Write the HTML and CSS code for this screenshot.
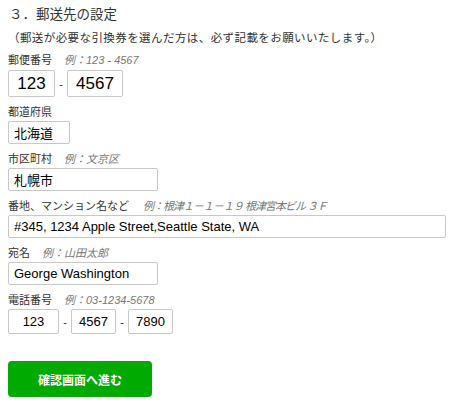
FILE: index.html
```html
<!DOCTYPE html>
<html lang="ja">
<head>
<meta charset="utf-8">
<title>郵送先の設定</title>
<link rel="stylesheet" href="styles.css">
</head>
<body>
<div class="page">
  <h2 class="title">３．郵送先の設定</h2>
  <p class="note">（郵送が必要な引換券を選んだ方は、必ず記載をお願いいたします。）</p>

  <div class="field field-first">
    <div class="label-row"><span class="label">郵便番号</span><span class="example">例：123 - 4567</span></div>
    <div class="inputs">
      <input class="box box-big w47" type="text" value="123">
      <span class="dash">-</span>
      <input class="box box-big w56" type="text" value="4567">
    </div>
  </div>

  <div class="field">
    <div class="label-row"><span class="label">都道府県</span></div>
    <input class="box text w62" type="text" value="北海道">
  </div>

  <div class="field">
    <div class="label-row"><span class="label">市区町村</span><span class="example">例：文京区</span></div>
    <input class="box text w150" type="text" value="札幌市">
  </div>

  <div class="field">
    <div class="label-row"><span class="label">番地、マンション名など</span><span class="example tight">例：根津１－１－１９ 根津宮本ビル ３Ｆ</span></div>
    <input class="box text w438" type="text" value="#345, 1234 Apple Street,Seattle State, WA">
  </div>

  <div class="field">
    <div class="label-row"><span class="label">宛名</span><span class="example">例：山田太郎</span></div>
    <input class="box text w150" type="text" value="George Washington">
  </div>

  <div class="field">
    <div class="label-row"><span class="label">電話番号</span><span class="example">例：03-1234-5678</span></div>
    <div class="inputs">
      <input class="box box-tel w51" type="text" value="123">
      <span class="dash">-</span>
      <input class="box box-tel w45" type="text" value="4567">
      <span class="dash">-</span>
      <input class="box box-tel w45" type="text" value="7890">
    </div>
  </div>

  <button class="submit" type="button">確認画面へ進む</button>
</div>
</body>
</html>
```

FILE: styles.css
```css
* { box-sizing: border-box; }

html, body {
  margin: 0;
  padding: 0;
  background: #ffffff;
}

body {
  font-family: "Liberation Sans", "Noto Sans CJK JP", sans-serif;
  color: #333333;
}

.page {
  padding: 5px 8px 0 8px;
  display: flex;
  flex-direction: column;
  align-items: flex-start;
}

.title {
  margin: 0;
  font-size: 13.5px;
  font-weight: normal;
  line-height: 20px;
  padding-left: 1px;
}

.note {
  margin: 6px 0 0 0;
  font-size: 11.5px;
  letter-spacing: 0.42px;
  line-height: 14px;
}

.field {
  display: flex;
  flex-direction: column;
  align-items: flex-start;
  margin-top: 8px;
}

.label-row {
  display: flex;
  align-items: baseline;
  height: 15px;
  line-height: 15px;
  margin-bottom: 1px;
}

.label {
  font-size: 11px;
  color: #333333;
}

.example {
  font-size: 11px;
  font-style: italic;
  color: #777777;
  margin-left: 12px;
}

.example.tight {
  letter-spacing: -1px;
  margin-left: 14px;
}

.field-first .label-row {
  margin-bottom: 2px;
}

.inputs {
  display: flex;
  align-items: center;
}

.dash {
  font-size: 11px;
  color: #333333;
  width: 12px;
  text-align: center;
}

.box {
  font-family: "Liberation Sans", "Noto Sans CJK JP", sans-serif;
  color: #000000;
  border: 1px solid #c8c8c8;
  border-radius: 2px;
  background: #ffffff;
  margin: 0;
  outline: none;
}

.box-big {
  height: 27px;
  font-size: 17px;
  text-align: center;
  padding: 0 2px;
}

.box-tel {
  height: 25px;
  font-size: 13px;
  text-align: center;
  padding: 0 2px;
}

.text {
  height: 23px;
  font-size: 13px;
  padding: 0 5px;
}

.w45 { width: 45px; }
.w47 { width: 47px; }
.w51 { width: 51px; }
.w56 { width: 56px; }
.w62 { width: 62px; }
.w150 { width: 150px; }
.w438 { width: 438px; }

.submit {
  margin-top: 27px;
  width: 144px;
  height: 36px;
  border: none;
  border-radius: 4px;
  background: #00aa00;
  color: #ffffff;
  font-family: "Liberation Sans", "Noto Sans CJK JP", sans-serif;
  font-size: 12px;
  font-weight: bold;
  padding: 0;
}
```
